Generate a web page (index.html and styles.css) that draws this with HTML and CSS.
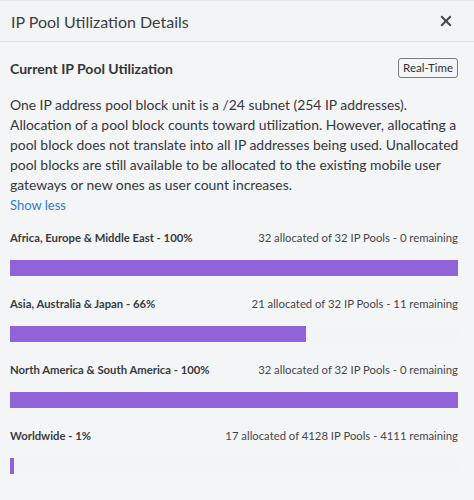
FILE: index.html
```html
<!DOCTYPE html>
<html>
<head>
<meta charset="utf-8">
<link rel="stylesheet" href="styles.css">
</head>
<body>
<div class="panel">
  <header class="head">
    <h1 class="title">IP Pool Utilization Details</h1>
    <button class="close" aria-label="Close">
      <svg width="12" height="12" viewBox="0 0 12 12"><path d="M1.2 1.2L10.8 10.8M10.8 1.2L1.2 10.8" stroke="#43474d" stroke-width="2" stroke-linecap="butt"/></svg>
    </button>
  </header>
  <main class="body">
    <div class="section-head">
      <h2 class="section-title">Current IP Pool Utilization</h2>
      <span class="badge">Real-Time</span>
    </div>
    <p class="desc">One IP address pool block unit is a /24 subnet (254 IP addresses). Allocation of a pool block counts toward utilization. However, allocating a pool block does not translate into all IP addresses being used. Unallocated pool blocks are still available to be allocated to the existing mobile user gateways or new ones as user count increases.</p>
    <a class="toggle" href="#">Show less</a>
    <div class="regions">
      <div class="region">
        <div class="region-row"><span class="region-name">Africa, Europe &amp; Middle East - 100%</span><span class="region-meta">32 allocated of 32 IP Pools - 0 remaining</span></div>
        <div class="track"><div class="fill" style="width:100%"></div></div>
      </div>
      <div class="region">
        <div class="region-row"><span class="region-name">Asia, Australia &amp; Japan - 66%</span><span class="region-meta">21 allocated of 32 IP Pools - 11 remaining</span></div>
        <div class="track"><div class="fill" style="width:66%"></div></div>
      </div>
      <div class="region">
        <div class="region-row"><span class="region-name">North America &amp; South America - 100%</span><span class="region-meta">32 allocated of 32 IP Pools - 0 remaining</span></div>
        <div class="track"><div class="fill" style="width:100%"></div></div>
      </div>
      <div class="region">
        <div class="region-row"><span class="region-name">Worldwide - 1%</span><span class="region-meta">17 allocated of 4128 IP Pools - 4111 remaining</span></div>
        <div class="track"><div class="fill" style="width:1%"></div></div>
      </div>
    </div>
  </main>
</div>
</body>
</html>
```
FILE: styles.css
```css
* { box-sizing: border-box; }
html, body {
  margin: 0;
  padding: 0;
  background: #f4f5f7;
  font-family: Lato, "Open Sans", sans-serif;
  color: #333639;
}
.panel {
  width: 474px;
  min-height: 500px;
  border-top: 1px solid #e6e8eb;
}
.head {
  height: 41px;
  display: flex;
  align-items: center;
  justify-content: space-between;
  padding: 0 16px 0 11px;
  border-bottom: 1px solid #dfe1e4;
  background: #f3f4f6;
}
.title {
  margin: 0;
  font-size: 16px;
  font-weight: 400;
  color: #3a3e44;
}
.close {
  border: 0;
  background: none;
  padding: 0;
  margin-right: 6px;
  width: 12px;
  height: 12px;
  display: flex;
}
.body {
  padding: 0 16px 0 10px;
}
.section-head {
  margin-top: 15px;
  display: flex;
  align-items: center;
  justify-content: space-between;
  height: 22px;
}
.section-title {
  margin: 0;
  font-size: 14px;
  font-weight: 700;
  color: #33363a;
}
.badge {
  font-size: 11.5px;
  border: 1px solid #7a7d82;
  border-radius: 3px;
  padding: 2px 4px;
  line-height: 14px;
  color: #2f3236;
}
.desc {
  margin: 16px -6px 0 0;
  font-size: 13.9px;
  line-height: 20px;
  color: #34373b;
}
.toggle {
  display: block;
  font-size: 13px;
  line-height: 20px;
  color: #2f7cd3;
  text-decoration: none;
}
.regions {
  margin-top: 14px;
  display: flex;
  flex-direction: column;
}
.region-row {
  display: flex;
  justify-content: space-between;
  align-items: center;
  height: 16px;
  font-size: 11.3px;
}
.region-name {
  font-weight: 700;
  color: #383b3f;
}
.region-meta {
  color: #44474b;
}
.track {
  margin: 15px 0 19px;
  height: 16px;
  background: #f1f3f3;
  opacity: 1;
}
.track {
  background: #f3f4f5;
}
.fill {
  height: 100%;
  background: #9163d8;
}
```
